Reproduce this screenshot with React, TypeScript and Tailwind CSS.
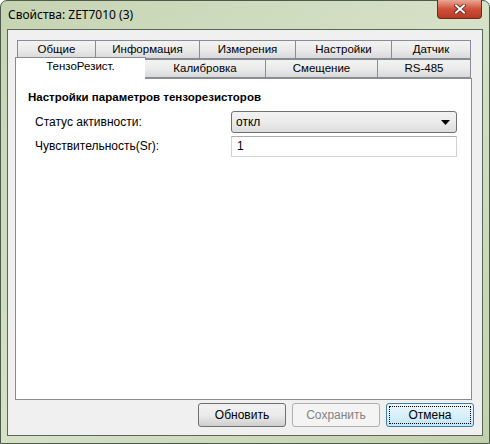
import React from "react";

const font = { fontFamily: '"Liberation Sans", Arial, sans-serif' };

function Tab({ label, w, first }: { label: string; w: string; first?: boolean }) {
  return (
    <div
      className={`${w} h-[19px] flex items-center justify-center border border-[#898c95] ${
        first ? "" : "border-l-0"
      } bg-gradient-to-b from-[#f3f3f3] via-[#ebebeb] to-[#d9d9d9] text-[11.5px] text-black leading-none`}
    >
      {label}
    </div>
  );
}

function Button({
  label,
  disabled,
  focused,
}: {
  label: string;
  disabled?: boolean;
  focused?: boolean;
}) {
  if (disabled) {
    return (
      <div className="w-[88px] h-[24px] rounded-[3px] border border-[#adb2b5] bg-[#f4f4f4] flex items-center justify-center text-[12px] text-[#838383]">
        {label}
      </div>
    );
  }
  return (
    <div
      className={`w-[88px] h-[24px] rounded-[3px] border ${
        focused ? "border-[#3c7fb1]" : "border-[#707070]"
      } bg-gradient-to-b ${
        focused ? "from-[#eaf6fd] via-[#d9f0fc] to-[#bee6fd]" : "from-[#f2f2f2] via-[#ebebeb] to-[#cfcfcf]"
      } flex items-center justify-center text-[12px] text-black p-[2px]`}
    >
      <div
        className={`w-full h-full flex items-center justify-center ${
          focused ? "border border-dotted border-black" : ""
        }`}
      >
        {label}
      </div>
    </div>
  );
}

export default function App() {
  return (
    <div
      className="w-[490px] h-[444px] rounded-t-[7px] border border-[#4d5c4a] bg-gradient-to-br from-[#c6d4b3] via-[#d6e1c8] to-[#c2d1ad] flex flex-col"
      style={font}
    >
      {/* title bar */}
      <div className="h-[29px] flex items-start justify-between pl-[7px] pr-[7px]">
        <div className="pt-[5px] text-[12px] text-black" style={{ fontFamily: '"Noto Sans", "Open Sans", sans-serif' }}>
          Свойства: ZET7010 (3)
        </div>
        <div className="w-[45px] h-[19px] -mt-px rounded-b-[4px] border border-[#6d2a1e] border-t-0 bg-gradient-to-b from-[#e8a895] via-[#d0503a] to-[#b53b23] flex items-center justify-center">
          <svg width="12" height="10" viewBox="0 0 12 10">
            <path d="M2 1.5 L10 8.5 M10 1.5 L2 8.5" stroke="#5a2014" strokeWidth="3.6" strokeLinecap="square" />
            <path d="M2 1.5 L10 8.5 M10 1.5 L2 8.5" stroke="#ffffff" strokeWidth="2" strokeLinecap="square" />
          </svg>
        </div>
      </div>

      {/* client area */}
      <div className="mx-[6px] mb-[7px] flex-1 border border-[#5a6658] bg-[#f0f0f0] flex flex-col px-[7px] pt-[10px] pb-[8px]">
        {/* tab rows */}
        <div className="flex pl-[2px]">
          <Tab label="Общие" w="w-[79px]" first />
          <Tab label="Информация" w="w-[104px]" />
          <Tab label="Измерения" w="w-[96px]" />
          <Tab label="Настройки" w="w-[96px]" />
          <Tab label="Датчик" w="w-[79px]" />
        </div>
        <div className="flex items-end h-[20px] -mt-[1px] relative z-10">
          <div className="w-[131px] h-[22px] -mb-px border border-[#898c95] border-b-0 bg-white flex items-center justify-center text-[11.5px] pb-[3px]">
            ТензоРезист.
          </div>
          <div className="flex -ml-px">
            <Tab label="Калибровка" w="w-[121px]" />
            <Tab label="Смещение" w="w-[112px]" />
            <Tab label="RS-485" w="w-[93px]" />
          </div>
        </div>
        {/* panel */}
        <div className="h-[322px] w-[457px] border border-[#898c95] bg-white px-[12px] pt-[10px]">
          <div className="text-[11.5px] font-bold text-black">Настройки параметров тензорезисторов</div>
          <div className="mt-[5px] flex items-center h-[22px]">
            <div className="w-[203px] pl-[7px] text-[12px] text-black">Статус активности:</div>
            <div className="w-[226px] h-[22px] rounded-[3px] border border-[#707070] bg-gradient-to-b from-[#f2f2f2] via-[#ebebeb] to-[#dddddd] flex items-center justify-between pl-[4px] pr-[6px] text-[12px]">
              <span>откл</span>
              <svg width="9" height="5" viewBox="0 0 9 5">
                <path d="M0 0 H9 L4.5 5 Z" fill="#000" />
              </svg>
            </div>
          </div>
          <div className="mt-[2px] flex items-center h-[22px]">
            <div className="w-[203px] pl-[7px] text-[12px] text-black">Чувствительность(Sr):</div>
            <div className="w-[226px] h-[21px] border border-[#cfd3d8] border-t-[#abadb3] bg-white flex items-center pl-[5px] text-[12px]">
              1
            </div>
          </div>
        </div>
        {/* buttons */}
        <div className="flex justify-end gap-[6px] mt-[3px] pr-[1px]">
          <Button label="Обновить" />
          <Button label="Сохранить" disabled />
          <Button label="Отмена" focused />
        </div>
      </div>
    </div>
  );
}
